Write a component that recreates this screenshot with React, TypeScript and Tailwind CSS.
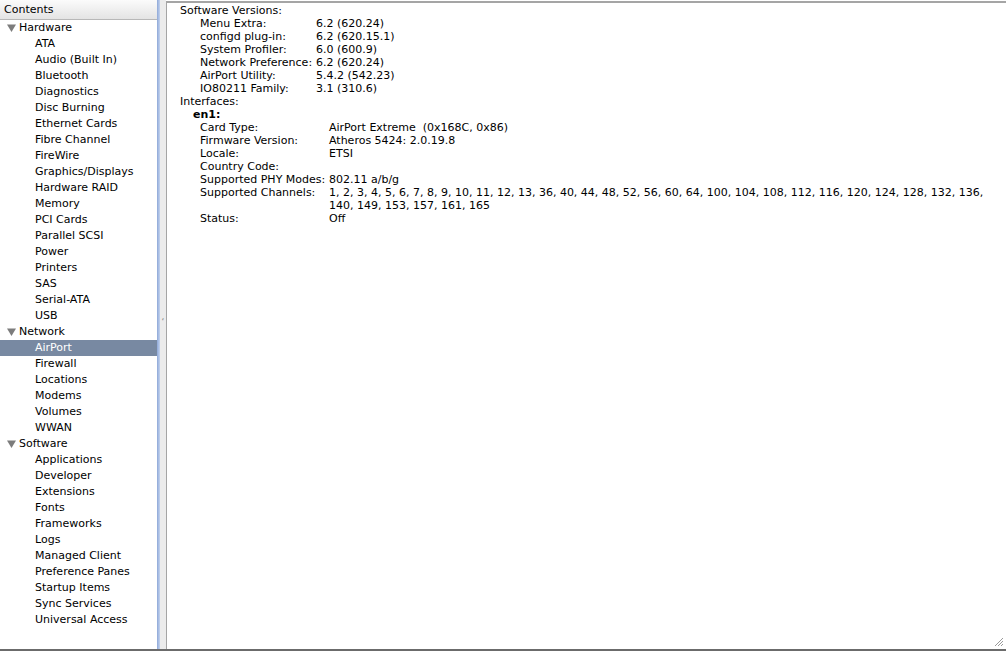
import React from 'react';

type Group = { title: string; items: string[] };

const groups: Group[] = [
  {
    title: 'Hardware',
    items: [
      'ATA', 'Audio (Built In)', 'Bluetooth', 'Diagnostics', 'Disc Burning', 'Ethernet Cards',
      'Fibre Channel', 'FireWire', 'Graphics/Displays', 'Hardware RAID', 'Memory', 'PCI Cards',
      'Parallel SCSI', 'Power', 'Printers', 'SAS', 'Serial-ATA', 'USB',
    ],
  },
  { title: 'Network', items: ['AirPort', 'Firewall', 'Locations', 'Modems', 'Volumes', 'WWAN'] },
  {
    title: 'Software',
    items: [
      'Applications', 'Developer', 'Extensions', 'Fonts', 'Frameworks', 'Logs', 'Managed Client',
      'Preference Panes', 'Startup Items', 'Sync Services', 'Universal Access',
    ],
  },
];

const versions: [string, string][] = [
  ['Menu Extra:', '6.2 (620.24)'],
  ['configd plug-in:', '6.2 (620.15.1)'],
  ['System Profiler:', '6.0 (600.9)'],
  ['Network Preference:', '6.2 (620.24)'],
  ['AirPort Utility:', '5.4.2 (542.23)'],
  ['IO80211 Family:', '3.1 (310.6)'],
];

const iface: [string, React.ReactNode][] = [
  ['Card Type:', 'AirPort Extreme\u00a0 (0x168C, 0x86)'],
  ['Firmware Version:', 'Atheros 5424: 2.0.19.8'],
  ['Locale:', 'ETSI'],
  ['Country Code:', ''],
  ['Supported PHY Modes:', '802.11 a/b/g'],
  [
    'Supported Channels:',
    <>
      <span className="block whitespace-nowrap">
        1, 2, 3, 4, 5, 6, 7, 8, 9, 10, 11, 12, 13, 36, 40, 44, 48, 52, 56, 60, 64, 100, 104, 108, 112, 116, 120, 124, 128, 132, 136,
      </span>
      <span className="block whitespace-nowrap">140, 149, 153, 157, 161, 165</span>
    </>,
  ],
  ['Status:', 'Off'],
];

function Triangle() {
  return (
    <svg width="9" height="8" viewBox="0 0 9 8" className="mr-[3px]">
      <polygon points="0,0.5 9,0.5 4.5,8" fill="#7c7c7c" />
    </svg>
  );
}

export default function App() {
  return (
    <div className="w-[1006px] h-[651px] flex flex-col bg-white overflow-hidden text-black text-[11px] font-['DejaVu_Sans',sans-serif]">
      <div className="flex flex-1 min-h-0">
        {/* sidebar */}
        <div className="w-[157px] flex flex-col shrink-0">
          <div className="h-[20px] pl-[4px] leading-[19px] border-b border-[#b8b8b8] bg-gradient-to-b from-[#fbfbfb] to-[#e4e4e4]">
            Contents
          </div>
          {groups.map((g) => (
            <div key={g.title}>
              <div className="h-[16px] leading-[16px] flex items-center pl-[7px]">
                <Triangle />
                {g.title}
              </div>
              {g.items.map((item) => (
                <div
                  key={item}
                  className={`h-[16px] leading-[16px] pl-[35px] ${
                    item === 'AirPort' ? 'bg-[#7889a2] text-white' : ''
                  }`}
                >
                  {item}
                </div>
              ))}
            </div>
          ))}
        </div>
        <div className="w-[3px] shrink-0 bg-gradient-to-r from-[#8ea8d8] to-[#c4d3ee]" />
        {/* splitter */}
        <div className="w-[6px] shrink-0 bg-[#ececec] flex items-center justify-center">
          <span className="text-[9px] leading-none text-[#888] -mt-[4px]">&#8216;</span>
        </div>
        {/* detail */}
        <div className="flex-1 border-l border-t-2 border-[#a5a5a5] mt-px pl-[13px] pt-[1px] leading-[13px] relative">
          <div>Software Versions:</div>
          {versions.map(([k, v]) => (
            <div key={k} className="flex pl-[20px]">
              <span className="w-[116px] shrink-0">{k}</span>
              <span>{v}</span>
            </div>
          ))}
          <div>Interfaces:</div>
          <div className="pl-[13px] font-bold">en1:</div>
          {iface.map(([k, v]) => (
            <div key={k} className="flex pl-[20px] min-h-[13px]">
              <span className="w-[129px] shrink-0">{k}</span>
              <span>{v}</span>
            </div>
          ))}
          <svg width="11" height="11" viewBox="0 0 11 11" className="absolute right-[2px] bottom-[2px]">
            <path d="M10 2 L2 10 M10 5 L5 10 M10 8 L8 10" stroke="#9a9a9a" strokeWidth="1" />
          </svg>
        </div>
      </div>
      <div className="h-[2px] bg-[#6b6b6b] shrink-0" />
    </div>
  );
}
